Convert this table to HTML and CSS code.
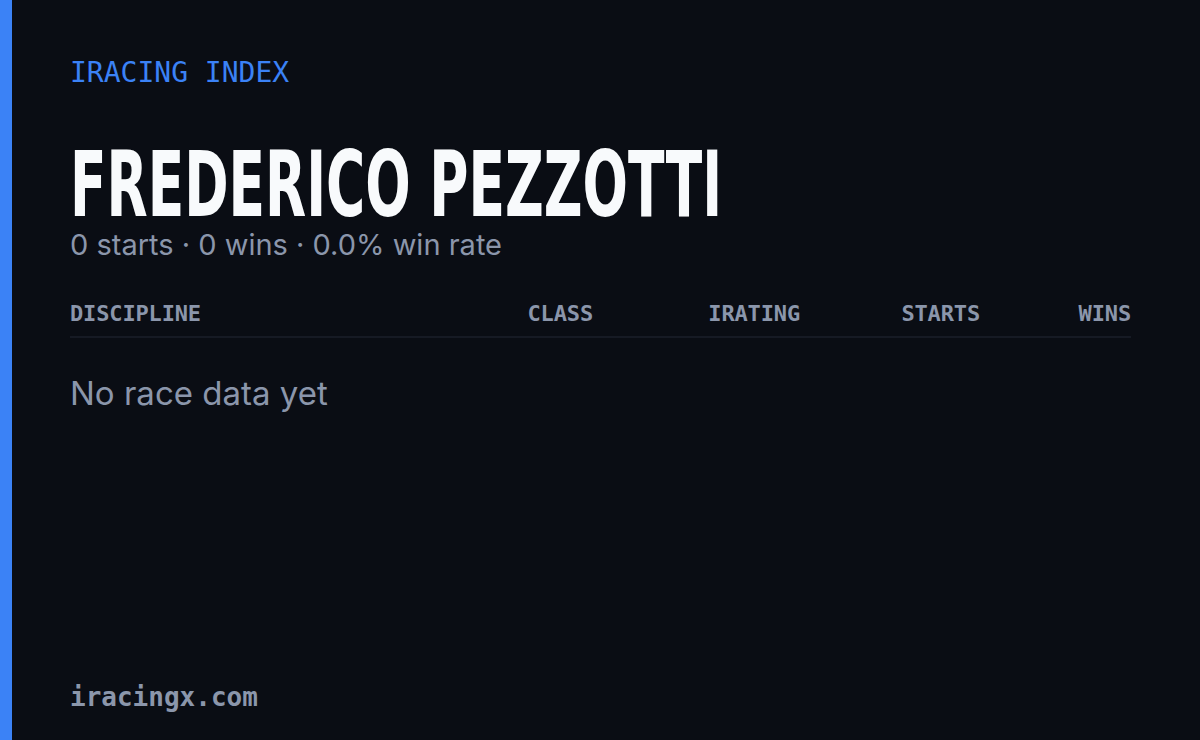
FILE: index.html
```html
<!DOCTYPE html>
<html>
<head>
    <title>iRacing Index - Frederico Pezzotti</title>
    <link rel="stylesheet" href="styles.css">
</head>
<body>
    <div class="card">
        <div class="accent-bar"></div>

        <div class="card-body">
            <div class="eyebrow">IRACING INDEX</div>

            <h1 class="driver-name"><span class="name-text">FREDERICO PEZZOTTI</span></h1>
            <div class="driver-summary">0 starts · 0 wins · 0.0% win rate</div>

            <div class="stats-table">
                <div class="stats-head">
                    <span class="col-left">DISCIPLINE</span>
                    <span>CLASS</span>
                    <span>IRATING</span>
                    <span>STARTS</span>
                    <span>WINS</span>
                </div>
                <div class="empty-row">No race data yet</div>
            </div>

            <div class="site-url">iracingx.com</div>
        </div>
    </div>
</body>
</html>
```

FILE: styles.css
```css
body {
    margin: 0;
    padding: 0;
    background-color: #0a0d14;
    font-family: Inter, sans-serif;
}

.card {
    display: flex;
    width: 1200px;
    height: 740px;
    background-color: #0a0d14;
}

/* blue strip on the left edge */
.accent-bar {
    width: 12px;
    background-color: #3b82f6;
}

.card-body {
    flex: 1;
    display: flex;
    flex-direction: column;
    padding: 55px 69px 27px 58px;
}

.eyebrow {
    font-family: "DejaVu Sans Mono", monospace;
    font-size: 28px;
    line-height: 36px;
    color: #3b82f6;
}

.driver-name {
    margin: 56px 0 0 0;
    font-family: "DejaVu Sans Condensed", "DejaVu Sans", sans-serif;
    font-stretch: condensed;
    font-weight: bold;
    font-size: 90px;
    line-height: 76px;
    color: #f8fafc;
    white-space: nowrap;
}

/* no narrow display face installed, so squeeze the condensed one */
.name-text {
    display: inline-block;
    transform: scaleX(0.66);
    transform-origin: left center;
}

.driver-summary {
    margin-top: 4px;
    font-size: 29px;
    line-height: 36px;
    color: #8b96ab;
}

.stats-table {
    margin-top: 37px;
}

.stats-head {
    display: grid;
    grid-template-columns: 1fr 110px 207px 180px 151px;
    padding-bottom: 8px;
    border-bottom: 2px solid #161a24;
    font-family: "DejaVu Sans Mono", monospace;
    font-weight: bold;
    font-size: 22px;
    letter-spacing: -0.15px;
    line-height: 28px;
    color: #8b96ab;
}

.stats-head span {
    text-align: right;
}

.stats-head .col-left {
    text-align: left;
}

.empty-row {
    padding-top: 35px;
    font-size: 33px;
    line-height: 40px;
    color: #8b96ab;
}

.site-url {
    margin-top: auto;
    font-family: "DejaVu Sans Mono", monospace;
    font-weight: bold;
    font-size: 26px;
    line-height: 32px;
    color: #8b96ab;
}
```
